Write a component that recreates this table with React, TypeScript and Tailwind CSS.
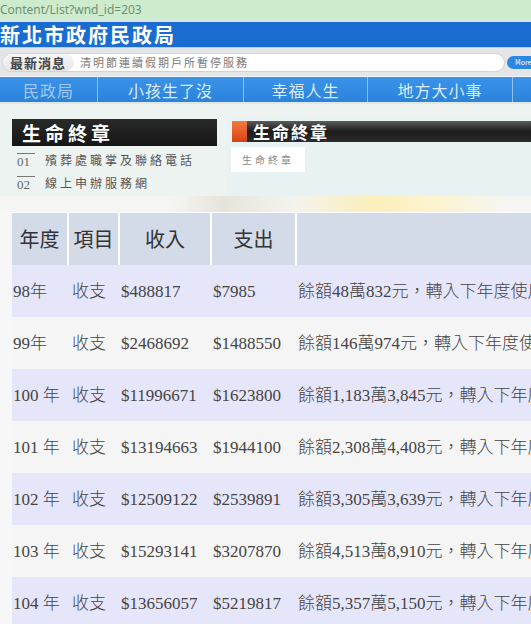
const rows = [
  ["98年", "收支", "$488817", "$7985", "餘額48萬832元，轉入下年度使用"],
  ["99年", "收支", "$2468692", "$1488550", "餘額146萬974元，轉入下年度使用"],
  ["100 年", "收支", "$11996671", "$1623800", "餘額1,183萬3,845元，轉入下年度使用"],
  ["101 年", "收支", "$13194663", "$1944100", "餘額2,308萬4,408元，轉入下年度使用"],
  ["102 年", "收支", "$12509122", "$2539891", "餘額3,305萬3,639元，轉入下年度使用"],
  ["103 年", "收支", "$15293141", "$3207870", "餘額4,513萬8,910元，轉入下年度使用"],
  ["104 年", "收支", "$13656057", "$5219817", "餘額5,357萬5,150元，轉入下年度使用"],
]

const navItems = ["民政局", "小孩生了沒", "幸福人生", "地方大小事"]
const navWidths = ["w-[98px]", "w-[146px]", "w-[124px]", "w-[145px]"]

const cols = "grid grid-cols-[55px_49px_90px_83px_1fr] gap-x-[2px]"

export default function App() {
  return (
    <div className="w-[531px] h-[624px] overflow-hidden bg-[#f6f7f6] font-['Noto_Sans_CJK_TC','Noto_Sans',sans-serif]">
      {/* address bar */}
      <div className="h-[19px] bg-[#cdeccd] flex items-center">
        <span className="text-[12px] text-[#6f8f73] font-['Noto_Sans',sans-serif] whitespace-nowrap">
          Content/List?wnd_id=203
        </span>
      </div>
      <div className="h-[3px] bg-[#dde2e4]" />

      {/* site title */}
      <div className="h-[26px] bg-[#1a6dd0] flex items-center border-b border-[#eab9b9]">
        <span className="text-[20px] leading-none font-bold tracking-[2px] text-white whitespace-nowrap">
          新北市政府民政局
        </span>
      </div>

      {/* news ticker */}
      <div className="h-[28px] bg-[#e3e5e7] flex items-center pl-[2px] gap-[2px]">
        <div className="h-[19px] w-[503px] shrink-0 rounded-full bg-white border border-[#cfd4d7] flex items-center">
          <div className="h-full rounded-full bg-gradient-to-b from-[#f7f7f7] to-[#e6e6e6] flex items-center pl-[7px] pr-[8px]">
            <span className="text-[13px] font-bold tracking-[1px] text-[#444] leading-none">最新消息</span>
          </div>
          <span className="ml-[6px] text-[11px] tracking-[2px] text-[#7a7a7a] leading-none whitespace-nowrap">
            清明節連續假期戶所暫停服務
          </span>
        </div>
        <div className="h-[13px] w-[36px] shrink-0 rounded-full bg-[#2a88e2] flex items-center pl-[8px]">
          <span className="text-[7px] text-white leading-none">More</span>
        </div>
      </div>

      {/* nav */}
      <div className="h-[26px] border-t border-[#f3f5f7] bg-gradient-to-b from-[#3b93e8] to-[#2a83dc] flex">
        {navItems.map((item, i) => (
          <div
            key={item}
            className={`${navWidths[i]} shrink-0 h-full flex items-center justify-center border-r border-[#8fc1ef]`}
          >
            <span className={`text-[16px] leading-none tracking-[1px] ${i === 0 ? "text-[#9ecaf3]" : "text-[#dcebfc]"}`}>
              {item}
            </span>
          </div>
        ))}
      </div>
      <div className="h-[2px] bg-[#dfe7e9]" />

      {/* section */}
      <div className="h-[92px] bg-[#edf3f1] flex pt-[15px]">
        <div className="ml-[12px] w-[205px] shrink-0">
          <div className="h-[27px] bg-gradient-to-b from-[#2a2a2a] to-[#161616] flex items-center pl-[10px]">
            <span className="text-[19px] font-bold tracking-[4px] text-white leading-none">生命終章</span>
          </div>
          <div className="mt-[4px] flex items-center h-[20px] pl-[5px]">
            <span className="w-[18px] border-t border-[#777] text-[13px] leading-none pt-[1px] text-[#666] font-['Liberation_Serif',serif]">
              01
            </span>
            <span className="ml-[10px] text-[12px] tracking-[3px] text-[#555] leading-none whitespace-nowrap">
              殯葬處職掌及聯絡電話
            </span>
          </div>
          <div className="mt-[3px] flex items-center h-[20px] pl-[5px]">
            <span className="w-[18px] border-t border-[#777] text-[13px] leading-none pt-[1px] text-[#666] font-['Liberation_Serif',serif]">
              02
            </span>
            <span className="ml-[10px] text-[12px] tracking-[3px] text-[#555] leading-none whitespace-nowrap">
              線上申辦服務網
            </span>
          </div>
        </div>

        <div className="ml-[10px] flex-1 bg-[#e9f2f2] pt-[2px]">
          <div className="h-[21px] flex ml-[5px]">
            <div className="w-[15px] shrink-0 bg-gradient-to-b from-[#f27a3e] to-[#d8400f]" />
            <div className="flex-1 bg-gradient-to-b from-[#5c5c5c] via-[#1c1c1c] to-[#2c2c2c] flex items-center pl-[6px]">
              <span className="text-[17px] font-bold tracking-[2px] text-white leading-none">生命終章</span>
            </div>
          </div>
          <div className="mt-[5px] ml-[4px] w-[74px] h-[25px] bg-white flex items-center justify-center">
            <span className="text-[10px] tracking-[3px] text-[#888] leading-none">生命終章</span>
          </div>
        </div>
      </div>

      {/* decorative band */}
      <div className="h-[16px] bg-[linear-gradient(to_right,#f5f6f4_0%,#f5f6f4_32%,#e6e4da_42%,#f3f3ee_55%,#fbefbb_70%,#fdf3cf_82%,#f5f6f4_96%)]" />

      {/* table */}
      <div className="ml-[12px] font-['Liberation_Serif','Noto_Sans_CJK_TC',serif] text-[#444]">
        <div className={`${cols} h-[53px] bg-white pt-[1px]`}>
          {["年度", "項目", "收入", "支出", ""].map((h, i) => (
            <div key={i} className="bg-[#d3dae8] flex items-center justify-center">
              <span className="text-[20px] leading-none text-[#333] font-['Noto_Sans_CJK_TC',sans-serif]">{h}</span>
            </div>
          ))}
        </div>
        {rows.map((r, idx) => (
          <div
            key={r[0]}
            className={`${cols} h-[52px] ${idx % 2 === 0 ? "bg-[#e6e6fa]" : "bg-[#f5f5f5]"}`}
          >
            {r.map((c, j) => (
              <div key={j} className={`flex items-center whitespace-nowrap overflow-hidden ${j === 1 ? "pl-[3px]" : "pl-[1px]"}`}>
                <span className="text-[17px] leading-none font-light">{c}</span>
              </div>
            ))}
          </div>
        ))}
      </div>
    </div>
  )
}
